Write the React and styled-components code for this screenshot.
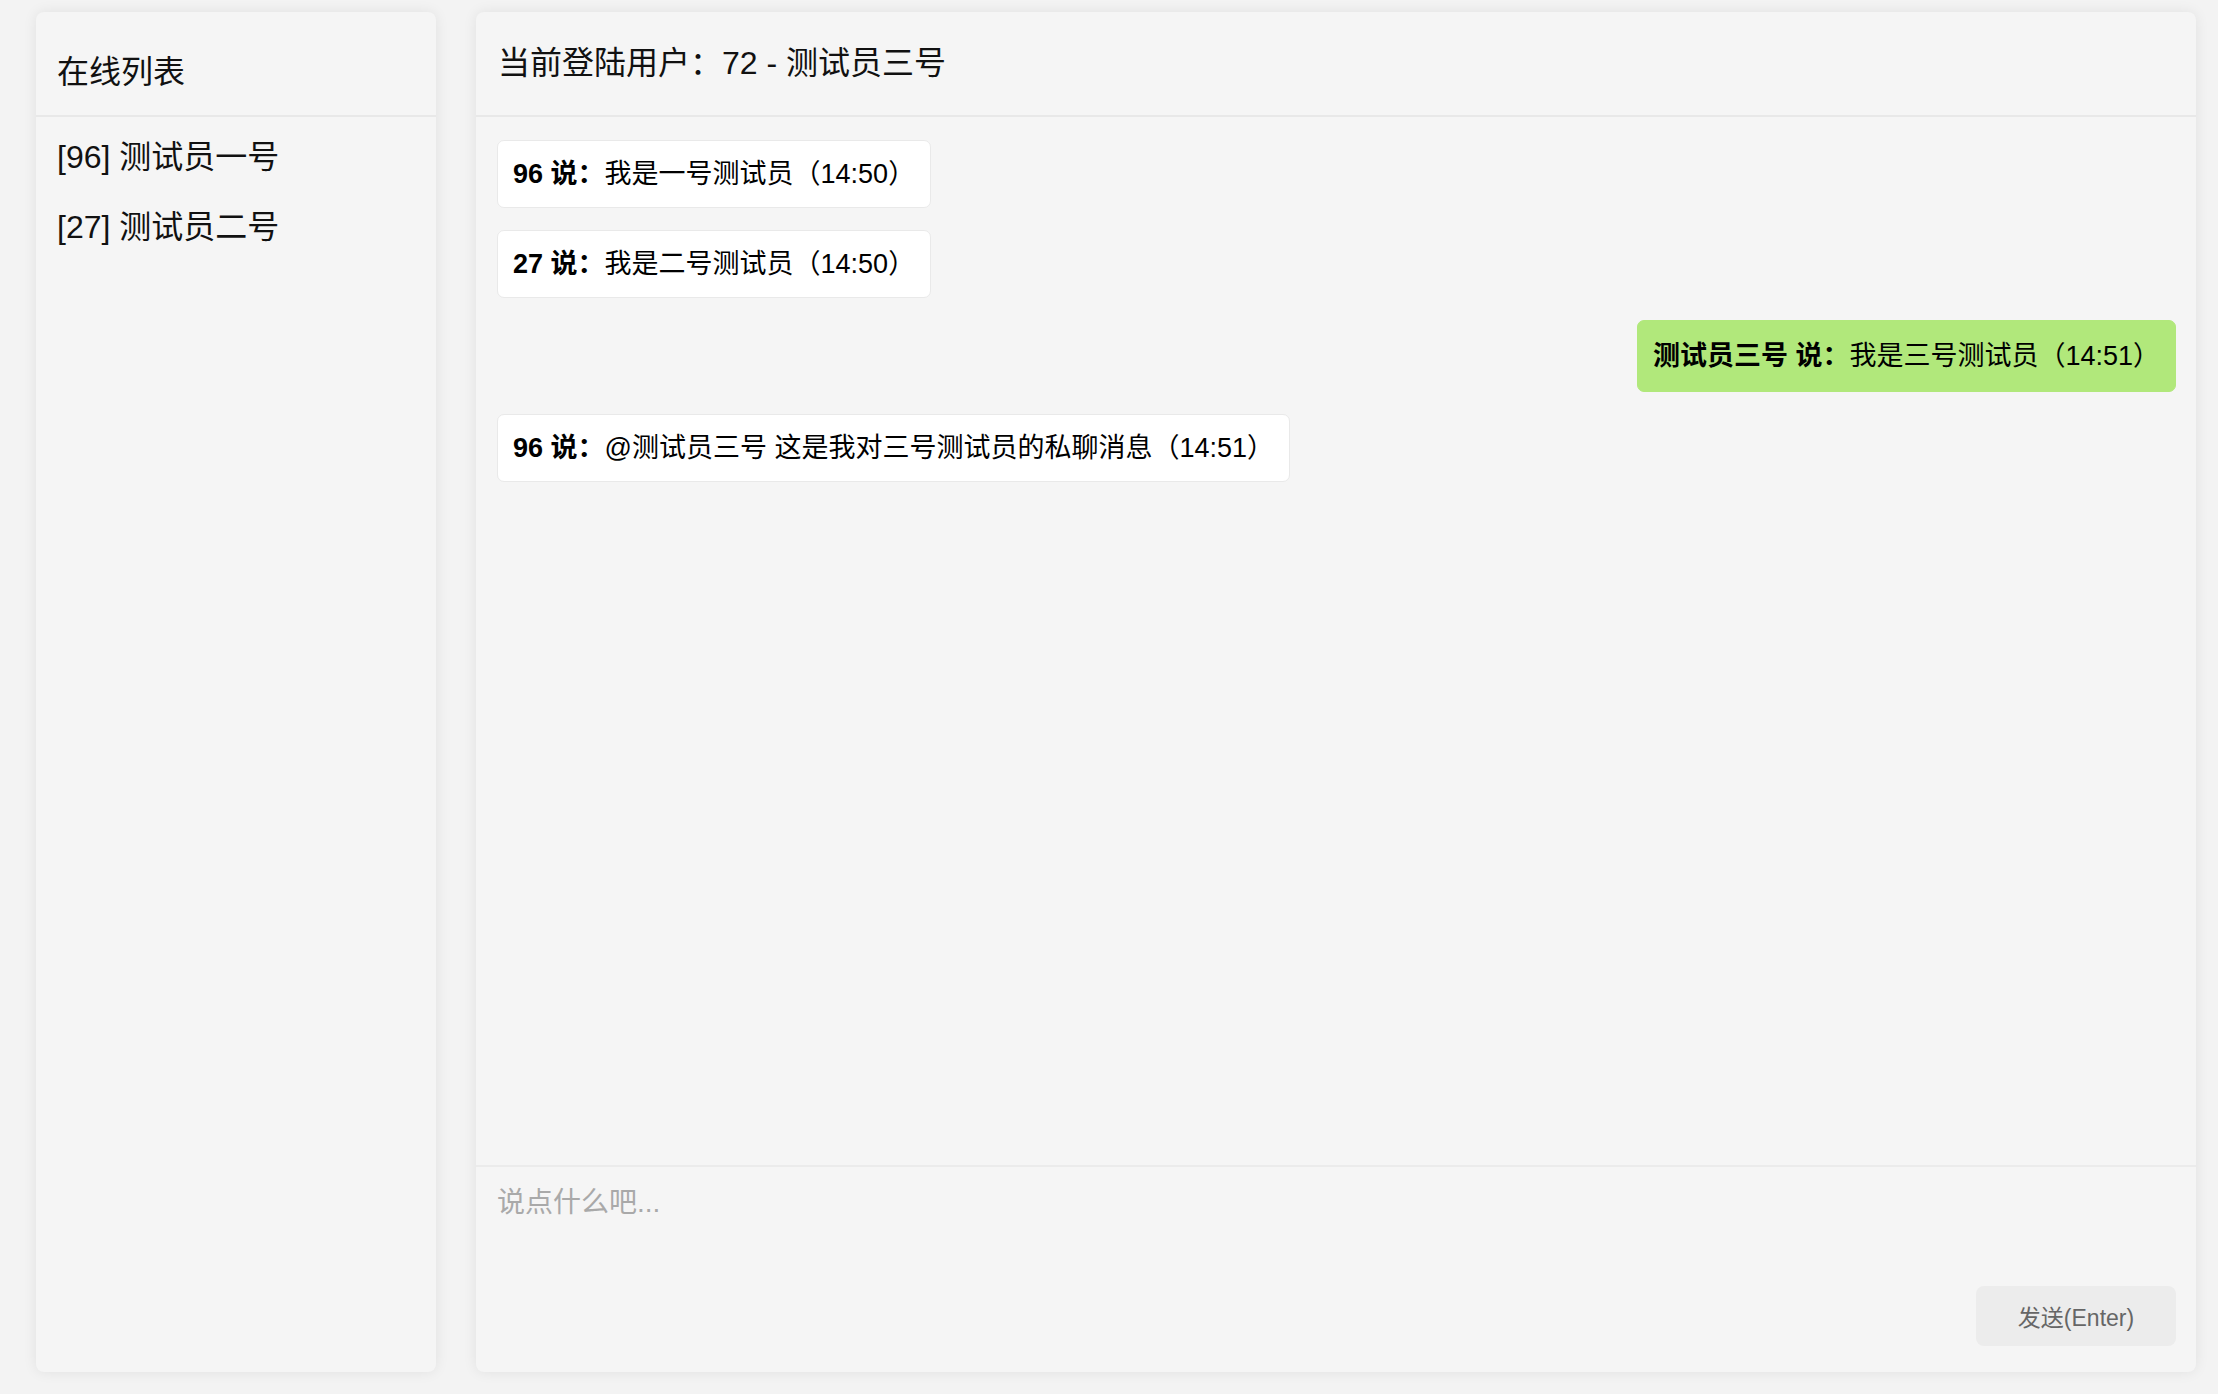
import React from 'react';
import styled, { createGlobalStyle } from 'styled-components';

const GlobalStyle = createGlobalStyle`
  html, body {
    margin: 0;
    padding: 0;
    background: #f3f3f3;
    font-family: "Liberation Sans", "Noto Sans CJK SC", sans-serif;
    color: #111;
  }
  * { box-sizing: border-box; }
`;

const Page = styled.div`
  display: flex;
  gap: 40px;
  height: 100vh;
  padding: 12px 22px 22px 36px;
`;

const Panel = styled.div`
  display: flex;
  flex-direction: column;
  background: #f5f5f5;
  border-radius: 8px;
  box-shadow: 0 0 14px rgba(0, 0, 0, 0.08);
  overflow: hidden;
`;

const Sidebar = styled(Panel)`
  flex: none;
  width: 400px;
`;

const ChatPanel = styled(Panel)`
  flex: auto;
`;

const SidebarTitle = styled.div`
  height: 105px;
  padding: 38px 21px 0;
  font-size: 32px;
  line-height: 44px;
  border-bottom: 2px solid #e8e8e8;
`;

const UserList = styled.ul`
  list-style: none;
  margin: 0;
  padding: 5px 0 0;

  li {
    padding: 13px 21px;
    font-size: 32px;
    line-height: 44px;
  }
`;

const ChatHeader = styled.div`
  flex: none;
  height: 105px;
  display: flex;
  align-items: center;
  padding: 0 22px 7px;
  font-size: 32px;
  border-bottom: 2px solid #e8e8e8;
`;

const Messages = styled.div`
  flex: auto;
  display: flex;
  flex-direction: column;
  align-items: flex-start;
  gap: 22px;
  padding: 23px 20px 0 21px;
`;

const Bubble = styled.div`
  align-self: ${(p) => (p.mine ? 'flex-end' : 'flex-start')};
  padding: ${(p) => (p.mine ? '15px 15px' : '13px 15px')};
  font-size: 27px;
  line-height: 40px;
  background: ${(p) => (p.mine ? '#b1e87b' : '#fff')};
  border: 1px solid ${(p) => (p.mine ? '#b1e87b' : '#e9e9e9')};
  border-radius: 7px;
  color: #000;

  b {
    font-weight: 700;
  }
`;

const Composer = styled.div`
  flex: none;
  height: 207px;
  display: flex;
  flex-direction: column;
  border-top: 2px solid #ebebeb;
`;

const Input = styled.textarea`
  flex: auto;
  border: none;
  outline: none;
  resize: none;
  background: transparent;
  padding: 16px 21px;
  font-family: inherit;
  font-size: 28px;
  line-height: 40px;
  color: #333;

  &::placeholder {
    color: #a9a9a9;
  }
`;

const Actions = styled.div`
  display: flex;
  justify-content: flex-end;
  padding: 0 20px 26px;
`;

const SendButton = styled.button`
  width: 200px;
  height: 60px;
  border: none;
  border-radius: 8px;
  background: #ececec;
  color: #666;
  font-family: inherit;
  font-size: 23px;
  cursor: pointer;
`;

const users = [
  { id: 96, name: '测试员一号' },
  { id: 27, name: '测试员二号' },
];

const messages = [
  { from: '96', text: '我是一号测试员（14:50）' },
  { from: '27', text: '我是二号测试员（14:50）' },
  { from: '测试员三号', text: '我是三号测试员（14:51）', mine: true },
  { from: '96', text: '@测试员三号 这是我对三号测试员的私聊消息（14:51）' },
];

export default function App() {
  return (
    <>
      <GlobalStyle />
      <Page>
        <Sidebar>
          <SidebarTitle>在线列表</SidebarTitle>
          <UserList>
            {users.map((u) => (
              <li key={u.id}>[{u.id}] {u.name}</li>
            ))}
          </UserList>
        </Sidebar>
        <ChatPanel>
          <ChatHeader>当前登陆用户：72 - 测试员三号</ChatHeader>
          <Messages>
            {messages.map((m, i) => (
              <Bubble key={i} mine={m.mine}>
                <b>{m.from} 说：</b>{m.text}
              </Bubble>
            ))}
          </Messages>
          <Composer>
            <Input placeholder="说点什么吧..." />
            <Actions>
              <SendButton>发送(Enter)</SendButton>
            </Actions>
          </Composer>
        </ChatPanel>
      </Page>
    </>
  );
}
